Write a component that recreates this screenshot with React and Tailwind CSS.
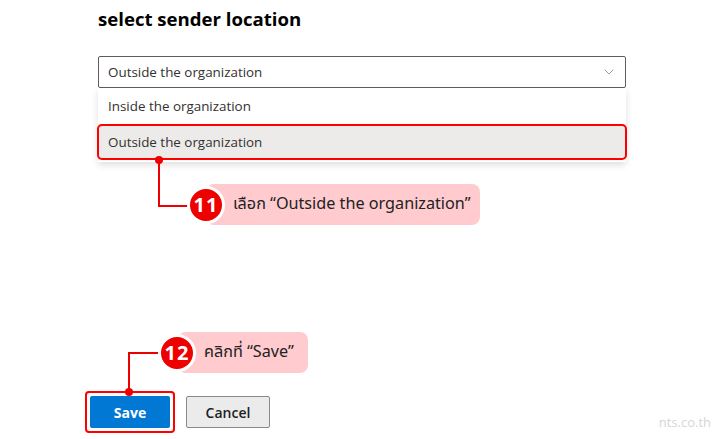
import { ChevronDown } from 'lucide-react'

const UI_FONT = "font-['Segoe_UI','Open_Sans','Noto_Sans',sans-serif]"
const THAI_FONT = "font-['Tahoma','Noto_Sans_Thai','Open_Sans',sans-serif]"

/* numbered red circle used by the callouts */
function StepBadge({ n, className = '' }) {
  return (
    <div
      className={`relative z-10 shrink-0 w-[38px] h-[38px] rounded-full bg-[#ee0000] border-[3px] border-white flex items-center justify-center text-white font-bold text-[20px] tracking-[1px] ${className}`}
    >
      {n}
    </div>
  )
}

function Pill({ children, className = '' }) {
  return (
    <div
      className={`shrink-0 h-[41px] rounded-[8px] bg-[#ffcbcf] flex items-center whitespace-nowrap text-[16.2px] text-[#222] ${THAI_FONT} ${className}`}
    >
      {children}
    </div>
  )
}

export default function App() {
  return (
    <div className={`relative w-[720px] h-[439px] bg-white overflow-hidden ${UI_FONT}`}>
      <div className="flex flex-col h-full">
        {/* Title */}
        <h1 className="pl-[98px] pt-[7px] text-[18.6px] leading-[24px] font-bold text-black">
          select sender location
        </h1>

        {/* Dropdown */}
        <div className="ml-[98px] mr-[94px] mt-[25px] h-8 border border-[#605e5c] rounded-[2px] flex items-center justify-between pl-[9px] pr-[8px] text-[13.4px] text-[#323130]">
          <span>Outside the organization</span>
          <ChevronDown className="w-4 h-4 text-[#8a8886]" strokeWidth={1.25} />
        </div>

        {/* Options list */}
        <div className="ml-[98px] mr-[94px] bg-white shadow-[0_3px_7px_rgba(0,0,0,0.13)] pb-[2px] text-[13.4px] text-[#323130]">
          <div className="h-9 flex items-center pl-[10px]">Inside the organization</div>
          <div className="relative h-9 flex items-center pl-[10px] bg-[#edebe9]">
            Outside the organization
            <div className="absolute -inset-x-[1px] inset-y-0 border-2 border-[#ff0000] rounded-[5px]" />
          </div>
        </div>

        {/* Buttons */}
        <div className="mt-auto mb-[6px] pl-[85px] flex items-center gap-[11px]">
          <div className="border-2 border-[#ff0000] rounded-[4px] p-[3px]">
            <button className="w-20 h-8 bg-[#0078d4] rounded-[2px] text-white text-[14px] font-bold">
              Save
            </button>
          </div>
          <button className="w-[84px] h-8 bg-[#ebebeb] border border-[#8a8886] rounded-[2px] text-[#201f1e] text-[14px] font-semibold">
            Cancel
          </button>
        </div>
      </div>

      {/* Callout 11 */}
      <div className="absolute left-[155px] top-[156px] flex items-start">
        <svg width="33" height="52" className="shrink-0">
          <path d="M4 4 V50 H33" fill="none" stroke="#ee0000" strokeWidth="2" />
          <circle cx="4" cy="4" r="4" fill="#ee0000" />
        </svg>
        <StepBadge n="11" className="mt-[30px] -ml-[1px]" />
        <Pill className="mt-[28px] -ml-[19px] w-[274px] pl-[27px]">
          เลือก “Outside the organization”
        </Pill>
      </div>

      {/* Callout 12 */}
      <div className="absolute left-[125px] top-[332px] flex items-start">
        <svg width="34" height="64" className="shrink-0">
          <path d="M4 60 V21 H34" fill="none" stroke="#ee0000" strokeWidth="2" />
          <circle cx="4" cy="60" r="4" fill="#ee0000" />
        </svg>
        <StepBadge n="12" className="mt-[2px] -ml-[1px]" />
        <Pill className="-ml-[18px] w-[130px] pl-[26px]">คลิกที่ “Save”</Pill>
      </div>

      {/* Watermark */}
      <div className="absolute right-[9px] bottom-[7px] text-[13px] text-[#d6d6d6]">nts.co.th</div>
    </div>
  )
}
